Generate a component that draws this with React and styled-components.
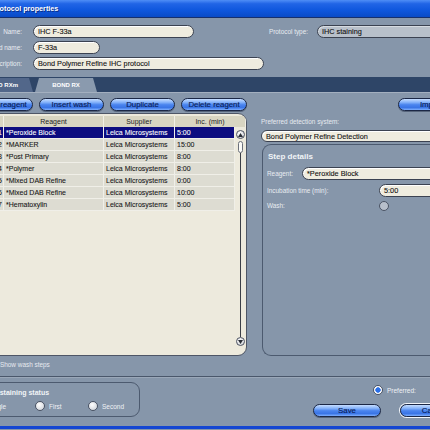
import React from 'react'
import styled, { createGlobalStyle } from 'styled-components'

const GlobalStyle = createGlobalStyle`
  html, body { margin: 0; padding: 0; background: #8696aa; }
  body { font-family: "Liberation Sans", Arial, sans-serif; }
  * { box-sizing: border-box; }
`

const Screen = styled.div`
  width: 430px;
  height: 430px;
  overflow: hidden;
  background: #8696aa;
`

const Dialog = styled.div`
  width: 540px;
  height: 430px;
  margin-left: -44px;
  display: flex;
  flex-direction: column;
`

const TitleBar = styled.div`
  height: 18px;
  flex-shrink: 0;
  border-bottom: 1px solid #17306c;
  background: linear-gradient(#4f8ef6 0%, #2165e6 22%, #0f57dd 60%, #0a4bc6 100%);
  color: #fff;
  font-weight: bold;
  font-size: 7.2px;
  display: flex;
  align-items: center;
  padding-left: 36px;
  text-shadow: 1px 1px 0 #0b2d85;
`

const Form = styled.div`
  height: 59px;
  flex-shrink: 0;
  padding-top: 7px;
  display: flex;
  flex-direction: column;
  gap: 3px;
`

const Row = styled.div`
  display: flex;
  align-items: center;
  height: 13px;
`

const Label = styled.div`
  width: ${p => p.w}px;
  margin-right: ${p => p.gap || 0}px;
  text-align: ${p => (p.left ? 'left' : 'right')};
  flex-shrink: 0;
  font-size: 6.4px;
  color: #e8ecf1;
  white-space: nowrap;
`

const Field = styled.div`
  width: ${p => p.w}px;
  height: ${p => p.h || 13}px;
  flex-shrink: 0;
  border-radius: 7px;
  border: 1px solid #3b4251;
  background: ${p => (p.grey ? '#b8c0ca' : '#efecdf')};
  box-shadow: inset 1px 1px 0 ${p => (p.grey ? '#d6dbe1' : '#ffffff')};
  font-size: 7.3px;
  color: #111;
  -webkit-text-stroke: 0.1px #111;
  padding-left: 4px;
  display: flex;
  align-items: center;
  white-space: nowrap;
  overflow: hidden;
`

const TabBand = styled.div`
  height: 16px;
  flex-shrink: 0;
  background: #2e4567;
  border-bottom: 1px solid #a3afbf;
  display: flex;
  align-items: flex-end;
  gap: 2px;
  padding-left: 14px;
`

const Tab = styled.div`
  width: ${p => p.w}px;
  height: 14px;
  background: ${p => (p.active ? '#8a9aae' : '#52678a')};
  clip-path: polygon(4px 0, calc(100% - 4px) 0, 100% 100%, 0 100%);
  color: #fff;
  font-weight: bold;
  font-size: 6px;
  display: flex;
  align-items: center;
  justify-content: center;
  white-space: nowrap;
`

const ButtonRow = styled.div`
  height: 13px;
  flex-shrink: 0;
  margin-top: 5px;
  display: flex;
  gap: 6px;
  padding-left: 22px;
`

const PillButton = styled.div`
  width: ${p => p.w}px;
  height: 13px;
  flex-shrink: 0;
  margin-left: ${p => p.ml || 0}px;
  border-radius: 7px;
  border: 1px solid #1b2745;
  background: linear-gradient(#c6ddff 0%, #86b3fa 30%, #4a84ee 52%, #3a75e6 78%, #7fb0ff 100%);
  box-shadow: ${p => (p.focus ? '0 0 0 1px #f3f6fa' : '0 1px 0 #56647a')};
  color: #081c5a;
  -webkit-text-stroke: 0.15px #081c5a;
  font-size: 7.8px;
  display: flex;
  align-items: center;
  justify-content: center;
  white-space: nowrap;
`

const Main = styled.div`
  height: 243px;
  flex-shrink: 0;
  margin-top: 2px;
  display: flex;
`

const LeftPanel = styled.div`
  margin-left: 14px;
  width: 277px;
  flex-shrink: 0;
  background: #edeadd;
  border: 1px solid #4e5666;
  border-radius: 9px;
  padding: 2px 0 0 15px;
  display: flex;
  flex-direction: column;
  overflow: hidden;
`

const HeaderRow = styled.div`
  display: grid;
  grid-template-columns: 18px 100px 71px 71px;
  height: 11px;
  background: #d8d5c2;
  font-size: 7px;
  color: #222;
`

const HeaderCell = styled.div`
  text-align: center;
  line-height: 11px;
  border-right: 1px solid #f1efe6;
  white-space: nowrap;
  overflow: hidden;
`

const TableBody = styled.div`
  display: flex;
  flex: 1;
`

const Rows = styled.div`
  width: 249px;
  display: flex;
  flex-direction: column;
`

const DataRow = styled.div`
  display: grid;
  grid-template-columns: 18px 100px 71px 60px;
  height: 12px;
  background: ${p => (p.selected ? '#0c0c80' : '#dddcd2')};
  color: ${p => (p.selected ? '#fff' : '#161616')};
  border-bottom: 1px solid #f0efe8;
  font-size: 7px;
  -webkit-text-stroke: 0.08px currentColor;
`

const Cell = styled.div`
  padding: 0 ${p => (p.num ? '1px' : '0')} 0 ${p => (p.num ? '0' : '2px')};
  text-align: ${p => (p.num ? 'right' : 'left')};
  line-height: 11px;
  border-right: 1px solid #f0efe8;
  white-space: nowrap;
  overflow: hidden;
`

const ScrollBar = styled.div`
  width: 11px;
  display: flex;
  flex-direction: column;
  align-items: center;
  padding: 3px 0 9px;
`

const ArrowBtn = styled.div`
  width: 9px;
  height: 9px;
  border-radius: 50%;
  border: 1px solid #4c5261;
  background: radial-gradient(circle at 40% 35%, #ffffff, #c9ccd2);
  display: flex;
  align-items: center;
  justify-content: center;
  flex-shrink: 0;
`

const Thumb = styled.div`
  width: 5px;
  height: 12px;
  margin-top: 2px;
  border-radius: 3px;
  border: 1px solid #6b707a;
  background: #fbfbf8;
  flex-shrink: 0;
`

const Track = styled.div`
  width: 1px;
  flex: 1;
  background: #3b3f47;
`

const RightCol = styled.div`
  margin-left: 14px;
  flex: 1;
  display: flex;
  flex-direction: column;
  padding-top: 5px;
`

const SmallLabel = styled.div`
  font-size: 6.4px;
  color: #e6eaf0;
  line-height: 8px;
  white-space: nowrap;
`

const GroupBox = styled.div`
  flex: 1;
  margin-top: 2px;
  margin-left: 1px;
  border: 1px solid #4c5a6f;
  border-right: none;
  border-radius: 9px 0 0 9px;
  padding: 7px 0 0 4px;
  display: flex;
  flex-direction: column;
  gap: 4px;
`

const GroupTitle = styled.div`
  font-size: 8px;
  font-weight: bold;
  color: #f1f4f7;
  line-height: 10px;
  margin: 0 0 1px 1px;
  white-space: nowrap;
`

const StepRow = styled.div`
  display: flex;
  align-items: center;
  height: ${p => p.h || 13}px;
`

const Radio = styled.div`
  width: 10px;
  height: 10px;
  flex-shrink: 0;
  border-radius: 50%;
  border: 1px solid #4a5364;
  background: ${p =>
    p.checked
      ? 'radial-gradient(circle, #2a6fe8 0, #2a6fe8 2.4px, #ffffff 3px)'
      : p.muted
      ? '#b7bfcb'
      : 'radial-gradient(circle at 40% 35%, #ffffff, #c7ccd4)'};
`

const WashRow = styled.div`
  height: 21px;
  flex-shrink: 0;
  display: flex;
  align-items: center;
  gap: 5px;
  padding: 0 0 3px 30px;
  border-bottom: 1px solid #4a576b;
`

const CheckBox = styled.div`
  width: 9px;
  height: 9px;
  border: 1px solid #4a5364;
  background: #eef0f3;
`

const LightLine = styled.div`
  height: 1px;
  flex-shrink: 0;
  background: #9aa7b8;
`

const BottomArea = styled.div`
  height: 48px;
  flex-shrink: 0;
  display: flex;
`

const StainGroup = styled.div`
  margin: 4px 0 0 14px;
  width: 170px;
  height: 35px;
  border: 1px solid #4c5a6f;
  border-radius: 9px;
  padding-top: 5px;
  display: flex;
  flex-direction: column;
  gap: 4px;
`

const StainTitle = styled.div`
  font-size: 7px;
  font-weight: bold;
  color: #f1f4f7;
  line-height: 9px;
  margin-left: 10px;
  white-space: nowrap;
`

const OptionRow = styled.div`
  display: flex;
  padding-left: 3px;
`

const Option = styled.div`
  width: ${p => (p.w ? p.w + 'px' : 'auto')};
  display: flex;
  align-items: center;
  gap: 4px;
  font-size: 6.5px;
  color: #eef1f5;
  white-space: nowrap;
`

const BottomRight = styled.div`
  margin-left: 173px;
  padding-top: 7px;
  display: flex;
  flex-direction: column;
`

const PreferredRow = styled.div`
  margin-left: 60px;
  display: flex;
  align-items: center;
  gap: 4px;
  font-size: 6.5px;
  color: #eef1f5;
`

const ActionRow = styled.div`
  margin-top: 9px;
  display: flex;
  gap: 19px;
`

const BlueBar = styled.div`
  height: 3px;
  flex-shrink: 0;
  background: #1446d2;
`

const steps = [
  ['1', '*Peroxide Block', 'Leica Microsystems', '5:00'],
  ['2', '*MARKER', 'Leica Microsystems', '15:00'],
  ['3', '*Post Primary', 'Leica Microsystems', '8:00'],
  ['4', '*Polymer', 'Leica Microsystems', '8:00'],
  ['5', '*Mixed DAB Refine', 'Leica Microsystems', '0:00'],
  ['6', '*Mixed DAB Refine', 'Leica Microsystems', '10:00'],
  ['7', '*Hematoxylin', 'Leica Microsystems', '5:00'],
]

function Arrow({ down }) {
  return (
    <svg width="5" height="4" viewBox="0 0 5 4">
      <polygon points={down ? '0,0 5,0 2.5,4' : '2.5,0 5,4 0,4'} fill="#2a2e36" />
    </svg>
  )
}

function App() {
  return (
    <Screen>
      <GlobalStyle />
      <Dialog>
        <TitleBar>Protocol properties</TitleBar>

        <Form>
          <Row>
            <Label w={66} gap={11}>Name:</Label>
            <Field w={161}>IHC F-33a</Field>
            <Label w={114} gap={9}>Protocol type:</Label>
            <Field w={200} grey>IHC staining</Field>
          </Row>
          <Row>
            <Label w={66} gap={11}>Abbreviated name:</Label>
            <Field w={67}>F-33a</Field>
          </Row>
          <Row>
            <Label w={66} gap={11}>Description:</Label>
            <Field w={231}>Bond Polymer Refine IHC protocol</Field>
          </Row>
        </Form>

        <TabBand>
          <Tab w={63}>BOND RXm</Tab>
          <Tab w={62} active>BOND RX</Tab>
        </TabBand>

        <ButtonRow>
          <PillButton w={55}>Add reagent</PillButton>
          <PillButton w={65}>Insert wash</PillButton>
          <PillButton w={65}>Duplicate</PillButton>
          <PillButton w={66}>Delete reagent</PillButton>
          <PillButton w={66} ml={145}>Import</PillButton>
        </ButtonRow>

        <Main>
          <LeftPanel>
            <HeaderRow>
              <HeaderCell>#</HeaderCell>
              <HeaderCell>Reagent</HeaderCell>
              <HeaderCell>Supplier</HeaderCell>
              <HeaderCell>Inc. (min)</HeaderCell>
            </HeaderRow>
            <TableBody>
              <Rows>
                {steps.map((s, i) => (
                  <DataRow key={i} selected={i === 0}>
                    <Cell num>{s[0]}</Cell>
                    <Cell>{s[1]}</Cell>
                    <Cell>{s[2]}</Cell>
                    <Cell>{s[3]}</Cell>
                  </DataRow>
                ))}
              </Rows>
              <ScrollBar>
                <ArrowBtn><Arrow /></ArrowBtn>
                <Thumb />
                <Track />
                <ArrowBtn><Arrow down /></ArrowBtn>
              </ScrollBar>
            </TableBody>
          </LeftPanel>

          <RightCol>
            <SmallLabel>Preferred detection system:</SmallLabel>
            <Field w={200} h={12} style={{ marginTop: 4 }}>Bond Polymer Refine Detection</Field>
            <GroupBox>
              <GroupTitle>Step details</GroupTitle>
              <StepRow>
                <Label w={35} left>Reagent:</Label>
                <Field w={200}>*Peroxide Block</Field>
              </StepRow>
              <StepRow>
                <Label w={112} left>Incubation time (min):</Label>
                <Field w={100}>5:00</Field>
              </StepRow>
              <StepRow h={9}>
                <Label w={112} left>Wash:</Label>
                <Radio muted />
              </StepRow>
            </GroupBox>
          </RightCol>
        </Main>

        <WashRow>
          <CheckBox />
          <SmallLabel>Show wash steps</SmallLabel>
        </WashRow>
        <LightLine />

        <BottomArea>
          <StainGroup>
            <StainTitle>Multi-staining status</StainTitle>
            <OptionRow>
              <Option w={61}><Radio />Single</Option>
              <Option w={53}><Radio />First</Option>
              <Option><Radio />Second</Option>
            </OptionRow>
          </StainGroup>
          <BottomRight>
            <PreferredRow>
              <Radio checked />Preferred:
            </PreferredRow>
            <ActionRow>
              <PillButton w={68}>Save</PillButton>
              <PillButton w={68} focus>Cancel</PillButton>
            </ActionRow>
          </BottomRight>
        </BottomArea>
        <BlueBar />
      </Dialog>
    </Screen>
  )
}

export default App
